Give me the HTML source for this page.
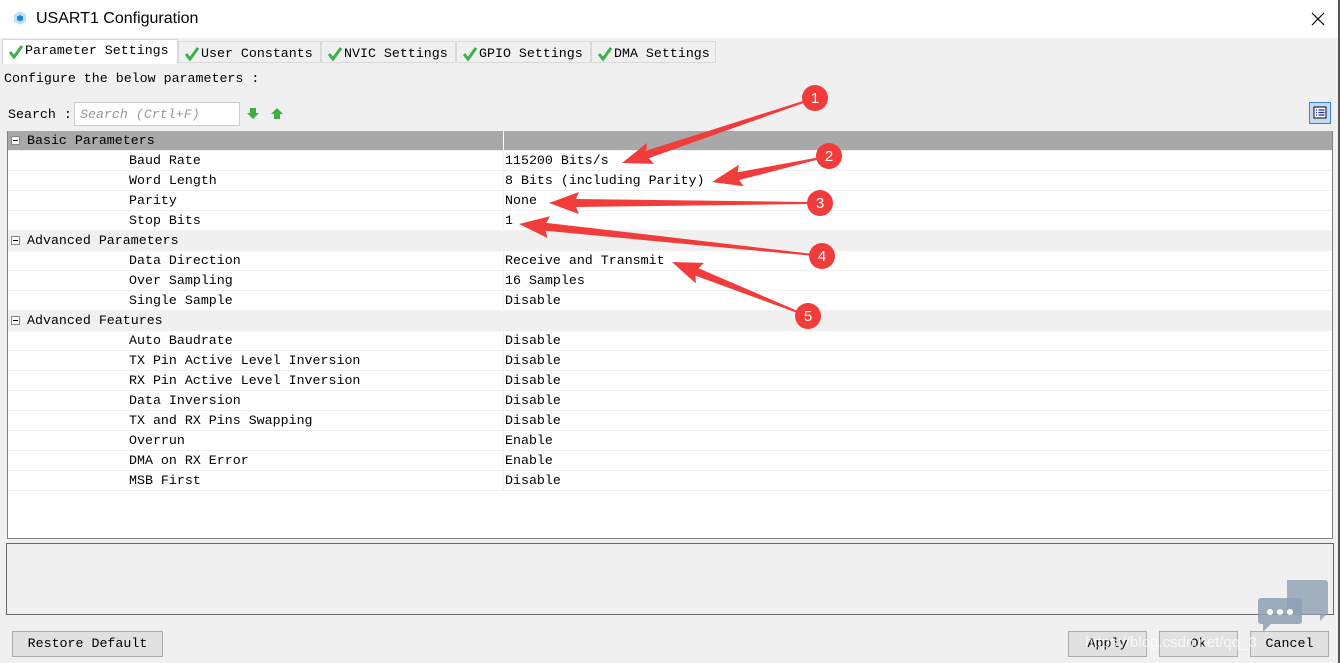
<!DOCTYPE html>
<html><head><meta charset="utf-8"><style>
*{margin:0;padding:0;box-sizing:border-box}
body{width:1340px;height:663px;background:#f0f0f0;font-family:"Liberation Mono",monospace;font-size:13.3px;color:#000;position:relative;overflow:hidden}
.abs{position:absolute}
.title{left:0;top:0;width:1338px;height:38px;background:#fff;font-family:"Liberation Sans",sans-serif;font-size:16px}
.tab{position:absolute;top:41px;height:22px;border:1px solid #d9d9d9;background:#f0f0f0;padding:4px 0 0 22px;white-space:nowrap}
.tab svg{position:absolute;left:4px;top:3px}
.tbl{left:7px;top:131px;width:1326px;height:408px;background:#fff;border:1px solid #828282;border-top:none}
.row{position:absolute;left:0;width:1324px;height:20px;border-bottom:1px solid #f0f0f0;line-height:20px}
.row .n{position:absolute;left:121px}
.row .v{position:absolute;left:495px;border-left:1px solid #f0f0f0;padding-left:1px;height:20px}
.g{background:#f0f0f0}
.g .n{left:19px}
.pm{position:absolute;left:3px;top:5px;width:9px;height:9px;border:1px solid #888;background:#fff}
.pm:after{content:"";position:absolute;left:1px;top:3px;width:5px;height:1px;background:#000}
.btn{position:absolute;top:631px;height:26px;border:1px solid #adadad;background:#e1e1e1;text-align:center;line-height:24px}
</style></head><body>
<div class="abs title">
<svg class="abs" style="left:12px;top:10px" width="16" height="16"><polygon points="8,1 14,4.5 14,11.5 8,15 2,11.5 2,4.5" fill="#bfe3f7"/><polygon points="8,5 11,6.5 11,10 8,11.5 5,10 5,6.5" fill="#1e88e5"/></svg>
<div class="abs" style="left:36px;top:10px">USART1 Configuration</div>
<svg class="abs" style="left:1311px;top:12px" width="14" height="14"><path d="M1 1L13 13M13 1L1 13" stroke="#000" stroke-width="1.2"/></svg>
</div>
<div class="abs" style="left:1338px;top:0;width:2px;height:663px;background:#555"></div>
<div class="tab" style="left:2px;top:39px;height:25px;width:176px;background:#fff;border-bottom:none;padding-top:3px"><svg width="18" height="18"><path d="M3 9L7 14L15 3" stroke="#3cb04a" stroke-width="3" fill="none"/></svg>Parameter Settings</div>
<div class="tab" style="left:178px;width:143px"><svg width="18" height="18"><path d="M3 9L7 14L15 3" stroke="#3cb04a" stroke-width="3" fill="none"/></svg>User Constants</div>
<div class="tab" style="left:321px;width:135px"><svg width="18" height="18"><path d="M3 9L7 14L15 3" stroke="#3cb04a" stroke-width="3" fill="none"/></svg>NVIC Settings</div>
<div class="tab" style="left:456px;width:135px"><svg width="18" height="18"><path d="M3 9L7 14L15 3" stroke="#3cb04a" stroke-width="3" fill="none"/></svg>GPIO Settings</div>
<div class="tab" style="left:591px;width:125px"><svg width="18" height="18"><path d="M3 9L7 14L15 3" stroke="#3cb04a" stroke-width="3" fill="none"/></svg>DMA Settings</div>
<div class="abs" style="left:4px;top:71px">Configure the below parameters :</div>
<div class="abs" style="left:8px;top:107px">Search :</div>
<div class="abs" style="left:74px;top:102px;width:166px;height:24px;background:#fff;border:1px solid #ccc;color:#999;font-style:italic;padding:4px 0 0 5px">Search (Crtl+F)</div>
<svg class="abs" style="left:247px;top:108px" width="12" height="12"><polygon points="3,0 9,0 9,5 12,5 6,11 0,5 3,5" fill="#3cb03c"/></svg>
<svg class="abs" style="left:271px;top:108px" width="12" height="12"><polygon points="3,11 9,11 9,6 12,6 6,0 0,6 3,6" fill="#3cb03c"/></svg>
<div class="abs" style="left:1309px;top:102px;width:22px;height:22px;border:1px solid #3c7fd6;background:#c7daf3"><svg width="20" height="20"><rect x="4" y="4" width="12" height="11" fill="#fff" stroke="#000"/><path d="M6 7h1M6 9.5h1M6 12h1M8.5 7h6M8.5 9.5h6M8.5 12h6" stroke="#1a2a9a" stroke-width="1.3"/></svg></div>
<div class="abs tbl">
<div class="row" style="top:0;background:#a8a8a8"><div class="pm"></div><span class="n" style="left:19px">Basic Parameters</span><span class="v" style="border-left-color:#fff"></span></div>
<div class="row" style="top:20px"><span class="n">Baud Rate</span><span class="v">115200 Bits/s</span></div>
<div class="row" style="top:40px"><span class="n">Word Length</span><span class="v">8 Bits (including Parity)</span></div>
<div class="row" style="top:60px"><span class="n">Parity</span><span class="v">None</span></div>
<div class="row" style="top:80px"><span class="n">Stop Bits</span><span class="v">1</span></div>
<div class="row g" style="top:100px"><div class="pm"></div><span class="n">Advanced Parameters</span></div>
<div class="row" style="top:120px"><span class="n">Data Direction</span><span class="v">Receive and Transmit</span></div>
<div class="row" style="top:140px"><span class="n">Over Sampling</span><span class="v">16 Samples</span></div>
<div class="row" style="top:160px"><span class="n">Single Sample</span><span class="v">Disable</span></div>
<div class="row g" style="top:180px"><div class="pm"></div><span class="n">Advanced Features</span></div>
<div class="row" style="top:200px"><span class="n">Auto Baudrate</span><span class="v">Disable</span></div>
<div class="row" style="top:220px"><span class="n">TX Pin Active Level Inversion</span><span class="v">Disable</span></div>
<div class="row" style="top:240px"><span class="n">RX Pin Active Level Inversion</span><span class="v">Disable</span></div>
<div class="row" style="top:260px"><span class="n">Data Inversion</span><span class="v">Disable</span></div>
<div class="row" style="top:280px"><span class="n">TX and RX Pins Swapping</span><span class="v">Disable</span></div>
<div class="row" style="top:300px"><span class="n">Overrun</span><span class="v">Enable</span></div>
<div class="row" style="top:320px"><span class="n">DMA on RX Error</span><span class="v">Enable</span></div>
<div class="row" style="top:340px"><span class="n">MSB First</span><span class="v">Disable</span></div>
</div>
<div class="abs" style="left:6px;top:543px;width:1328px;height:72px;border:1px solid #666;background:#f0f0f0"></div>
<div class="btn" style="left:12px;width:151px">Restore Default</div>
<div class="btn" style="left:1068px;width:79px">Apply</div>
<div class="btn" style="left:1159px;width:79px">Ok</div>
<div class="btn" style="left:1250px;width:79px">Cancel</div>
<svg class="abs" style="left:1255px;top:578px" width="80" height="60"><path d="M32 2h38a3 3 0 0 1 3 3v30l-8 8v-6H32z" fill="#8da0b3" opacity=".8"/><path d="M6 20h38a3 3 0 0 1 3 3v20a3 3 0 0 1-3 3H16l-8 8v-8H6a3 3 0 0 1-3-3V23a3 3 0 0 1 3-3z" fill="#8da0b3" opacity=".85"/><circle cx="15" cy="34" r="3" fill="#fff"/><circle cx="25" cy="34" r="3" fill="#fff"/><circle cx="35" cy="34" r="3" fill="#fff"/></svg>
<div class="abs" style="left:1085px;top:634px;font-family:'Liberation Sans',sans-serif;font-size:15px;color:rgba(255,255,255,.75)">https://blog.csdn.net/qq_3</div>
<svg class="abs" style="left:0;top:0" width="1340" height="663">
<g fill="#f23c3c">
<polygon transform="translate(622,163) rotate(-18.6)" points="0,0 30,-11 27,-4 192,-1 192,1 27,4 30,11"/>
<polygon transform="translate(712,182) rotate(-12.5)" points="0,0 30,-11 27,-4 108,-1 108,1 27,4 30,11"/>
<polygon transform="translate(549,203) rotate(0)" points="0,0 30,-11 27,-4 259,-1 259,1 27,4 30,11"/>
<polygon transform="translate(519,224) rotate(6)" points="0,0 30,-11 27,-4 293,-1 293,1 27,4 30,11"/>
<polygon transform="translate(672,262) rotate(21.7)" points="0,0 30,-11 27,-4 134,-1 134,1 27,4 30,11"/>
<circle cx="815" cy="98" r="13"/><circle cx="829" cy="156" r="13"/><circle cx="820" cy="203" r="13"/><circle cx="822" cy="256" r="13"/><circle cx="808" cy="316" r="13"/>
</g>
<g fill="#fff" font-family="Liberation Sans,sans-serif" font-size="15" text-anchor="middle">
<text x="815" y="103">1</text><text x="829" y="161">2</text><text x="820" y="208">3</text><text x="822" y="261">4</text><text x="808" y="321">5</text>
</g>
</svg>
</body></html>
